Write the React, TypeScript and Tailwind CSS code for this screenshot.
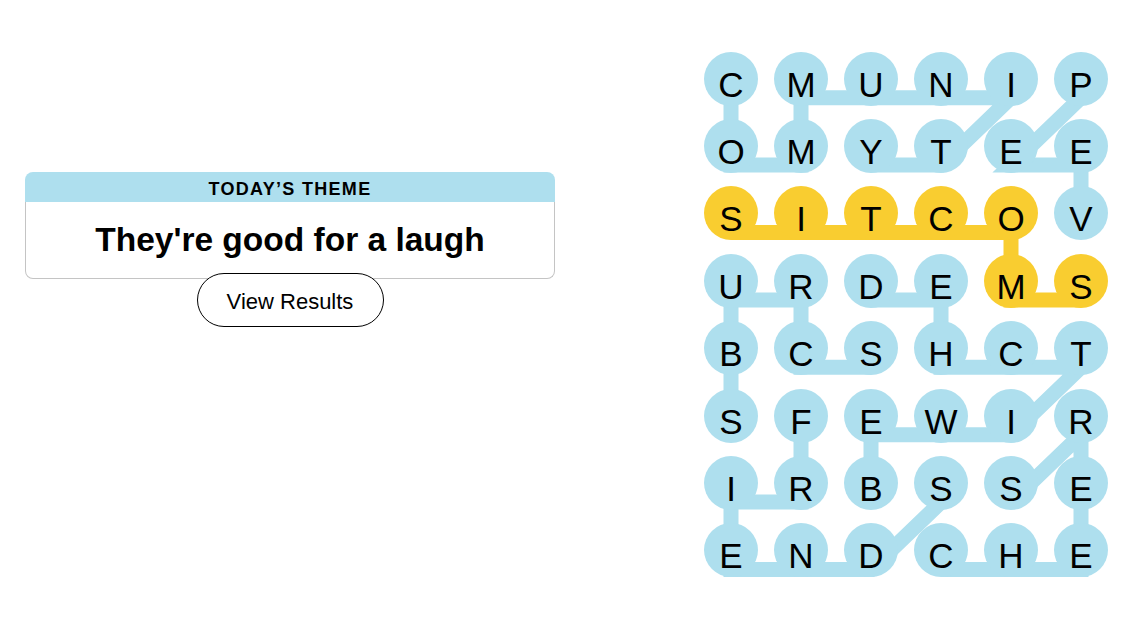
import React from "react";

const GRID = [
  "CMUNIP",
  "OMYTEE",
  "SITCOV",
  "URDEMS",
  "BCSHCT",
  "SFEWIR",
  "IRBSSE",
  "ENDCHE",
];

const BLUE = "#aedfee";
const YELLOW = "#f9cd30";

// word paths as [row, col]
const words: { cells: [number, number][]; spangram?: boolean }[] = [
  { cells: [[0, 0], [1, 0], [1, 1], [0, 1], [0, 2], [0, 3], [0, 4], [1, 3], [1, 2]] },
  { cells: [[2, 5], [1, 5], [1, 4], [0, 5]] },
  { cells: [[2, 0], [2, 1], [2, 2], [2, 3], [2, 4], [3, 4], [3, 5]], spangram: true },
  { cells: [[4, 2], [4, 1], [3, 1], [3, 0], [4, 0], [5, 0]] },
  { cells: [[6, 2], [5, 2], [5, 3], [5, 4], [4, 5], [4, 4], [4, 3], [3, 3], [3, 2]] },
  { cells: [[5, 1], [6, 1], [6, 0], [7, 0], [7, 1], [7, 2], [6, 3]] },
  { cells: [[7, 3], [7, 4], [7, 5], [6, 5], [5, 5], [6, 4]] },
];

const isSpangram = (r: number, c: number) =>
  words.some(w => w.spangram && w.cells.some(([a, b]) => a === r && b === c));

const pt = (r: number, c: number) => `${35 + 70 * c},${52.7 + 67.4 * r}`;

function Board() {
  return (
    <div className="relative w-[420px] h-[540px]">
      <svg className="absolute inset-0" width="420" height="540" viewBox="0 0 420 540">
        {words.map((w, i) => (
          <polyline
            key={i}
            points={w.cells.map(([r, c]) => pt(r, c)).join(" ")}
            fill="none"
            stroke={w.spangram ? YELLOW : BLUE}
            strokeWidth={15}
          />
        ))}
      </svg>
      <div className="relative grid grid-cols-[repeat(6,70px)] grid-rows-[repeat(8,67.4px)]">
        {GRID.map((row, r) =>
          row.split("").map((ch, c) => (
            <div key={`${r}-${c}`} className="flex items-center justify-center">
              <div
                className={`w-[54px] h-[54px] rounded-full flex items-center justify-center pt-[11px] text-[35px] leading-none text-black ${
                  isSpangram(r, c) ? "bg-[#f9cd30]" : "bg-[#aedfee]"
                }`}
              >
                {ch}
              </div>
            </div>
          ))
        )}
      </div>
    </div>
  );
}

export default function App() {
  return (
    <div className="flex w-[1144px] h-[644px] bg-white font-['Liberation_Sans',Arial,sans-serif]">
      <div className="ml-[25px] w-[530px] pt-[172px] flex flex-col items-center">
        <div className="w-full">
          <div className="h-[30px] bg-[#aedfee] rounded-t-[8px] flex items-center justify-center">
            <span className="text-[18px] font-bold tracking-[1.3px] text-black pt-[4px]">TODAY’S THEME</span>
          </div>
          <div className="h-[77px] border border-t-0 border-[#c4c4c4] rounded-b-[8px] flex items-center justify-center">
            <span className="text-[33.5px] font-bold text-black leading-none">They're good for a laugh</span>
          </div>
        </div>
        <button className="relative -mt-[6px] w-[187px] h-[54px] rounded-full border border-black bg-white text-[22px] text-black pt-[2px]">
          View Results
        </button>
      </div>
      <div className="ml-[141px] pt-[45px]">
        <Board />
      </div>
    </div>
  );
}
